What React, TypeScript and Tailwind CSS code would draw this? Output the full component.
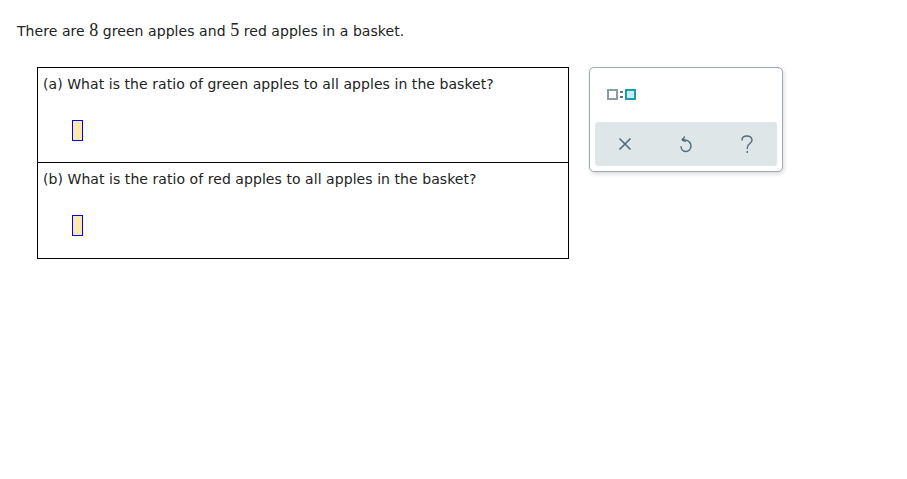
import React from "react";

const Blank = () => (
  <span className="block w-[11px] h-[21px] border border-solid border-[#0000ff] bg-[#fde9b0]" />
);

export default function App() {
  return (
    <div className="w-[907px] h-[479px] bg-white text-[#222] text-[14px] tracking-[0.06px] font-['DejaVu_Sans',Verdana,sans-serif]">
      <div className="pt-[20px] pl-[17px] h-[42px] leading-[22px]">
        There are <span className="font-['Liberation_Serif',serif] text-[18px] leading-none">8</span> green apples and{" "}
        <span className="font-['Liberation_Serif',serif] text-[18px] leading-none">5</span> red apples in a basket.
      </div>
      <div className="flex items-start mt-[25px] ml-[37px] gap-[20px]">
        <div className="w-[532px] border border-black">
          <div className="h-[95px] border-b border-black pl-[5px] pt-[6px]">
            <div className="leading-[20px]">(a) What is the ratio of green apples to all apples in the basket?</div>
            <div className="pl-[29px] pt-[26px] flex">
              <Blank />
            </div>
          </div>
          <div className="h-[95px] pl-[5px] pt-[6px]">
            <div className="leading-[20px]">(b) What is the ratio of red apples to all apples in the basket?</div>
            <div className="pl-[29px] pt-[26px] flex">
              <Blank />
            </div>
          </div>
        </div>
        <div className="w-[194px] h-[105px] rounded-[5px] border border-[#9aabb2] bg-white shadow-[1px_2px_4px_rgba(0,0,0,0.15)] px-[5px] pt-[21px]">
          <div className="flex items-center pl-[12px] h-[11px]">
            <span className="inline-block w-[11px] h-[11px] border-[2px] border-[#8a9ea6] bg-white" />
            <span className="mx-[2px] flex flex-col gap-[3px]">
              <span className="block w-[3px] h-[2px] bg-[#5a7480]" />
              <span className="block w-[3px] h-[2px] bg-[#5a7480]" />
            </span>
            <span className="inline-block w-[11px] h-[11px] border-[2px] border-[#1f9bb0] bg-[#c2eef4]" />
          </div>
          <div className="mt-[22px] h-[44px] rounded-[3px] bg-[#dfe6e8] grid grid-cols-3 place-items-center text-[#4d6b78]">
            <svg width="14" height="14" viewBox="0 0 14 14">
              <path d="M1.5 1.5 L12.5 12.5 M12.5 1.5 L1.5 12.5" stroke="currentColor" strokeWidth="1.6" fill="none" />
            </svg>
            <svg width="14" height="17" viewBox="0 0 14 17">
              <path d="M5.5 1 L3.2 3.8 L6.2 5.4" stroke="currentColor" strokeWidth="1.4" fill="none" strokeLinecap="round" strokeLinejoin="round" />
              <path d="M3.4 3.8 C8 3.2 12 6 12 10 C12 13.2 9.6 15.5 7 15.5 C4.4 15.5 2.2 13.5 2 10.8" stroke="currentColor" strokeWidth="1.4" fill="none" strokeLinecap="round" />
            </svg>
            <svg width="14" height="19" viewBox="0 0 14 19">
              <path d="M2 5 C2 2.5 4.2 1 7 1 C9.8 1 12 2.7 12 5.2 C12 8.3 7.3 8.8 7.3 12.5 L7.3 13.5" stroke="currentColor" strokeWidth="1.4" fill="none" strokeLinecap="round" />
              <circle cx="7.3" cy="17" r="0.9" fill="currentColor" />
            </svg>
          </div>
        </div>
      </div>
    </div>
  );
}
